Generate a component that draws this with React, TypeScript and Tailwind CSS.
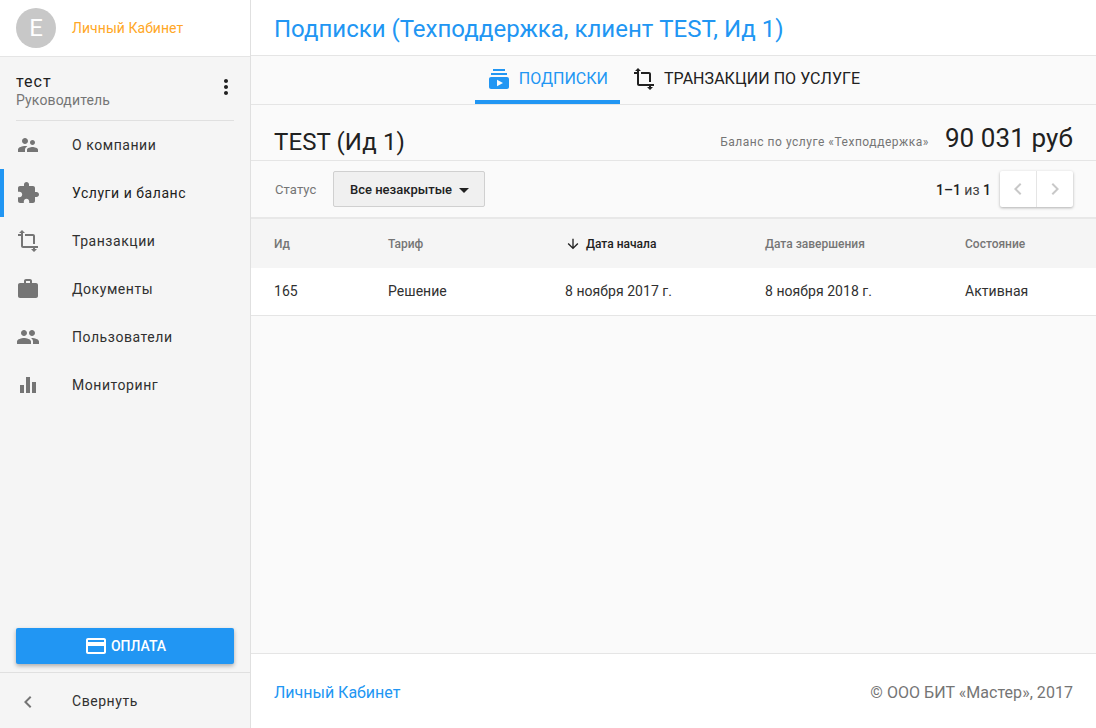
import React from 'react';

const Icon = ({ d, className }: { d: string; className?: string }) => (
  <svg viewBox="0 0 24 24" className={className} fill="currentColor">
    <path d={d} />
  </svg>
);

const ICONS = {
  company:
    'M16.5 12c1.38 0 2.49-1.12 2.49-2.5S17.88 7 16.5 7C15.12 7 14 8.12 14 9.5s1.12 2.5 2.5 2.5zM9 11c1.66 0 2.99-1.34 2.99-3S10.66 5 9 5C7.34 5 6 6.34 6 8s1.34 3 3 3zm7.5 3c-1.83 0-5.5.92-5.5 2.75V19h11v-2.25c0-1.83-3.67-2.75-5.5-2.75zM9 13c-2.33 0-7 1.17-7 3.5V19h7v-2.25c0-.85.33-2.34 2.37-3.47C10.5 13.1 9.66 13 9 13z',
  services:
    'M20.5 11H19V7c0-1.1-.9-2-2-2h-4V3.5C13 2.12 11.88 1 10.5 1S8 2.12 8 3.5V5H4c-1.1 0-1.99.9-1.99 2v3.8H3.5c1.49 0 2.7 1.21 2.7 2.7s-1.21 2.7-2.7 2.7H2V20c0 1.1.9 2 2 2h3.8v-1.5c0-1.49 1.21-2.7 2.7-2.7 1.49 0 2.7 1.21 2.7 2.7V22H17c1.1 0 2-.9 2-2v-4h1.5c1.38 0 2.5-1.12 2.5-2.5S21.88 11 20.5 11z',
  crop: 'M17 15h2V7c0-1.1-.9-2-2-2H9v2h8v8zM7 17V4H5v1H2v2h3v10c0 1.1.9 2 2 2h10v1h2v-1h3v-2H7zM6 1L3 4h6zM18 23l-3-3h6z',
  work: 'M20 6h-4V4c0-1.11-.89-2-2-2h-4c-1.11 0-2 .89-2 2v2H4c-1.11 0-1.99.89-1.99 2L2 19c0 1.11.89 2 2 2h16c1.11 0 2-.89 2-2V8c0-1.11-.89-2-2-2zm-6 0h-4V4h4v2z',
  people:
    'M16 11c1.66 0 2.99-1.34 2.99-3S17.66 5 16 5c-1.66 0-3 1.34-3 3s1.34 3 3 3zm-8 0c1.66 0 2.99-1.34 2.99-3S9.66 5 8 5C6.34 5 5 6.34 5 8s1.34 3 3 3zm0 2c-2.33 0-7 1.17-7 3.5V19h14v-2.5c0-2.33-4.67-3.5-7-3.5zm8 0c-.29 0-.62.02-.97.05 1.16.84 1.97 1.97 1.97 3.45V19h6v-2.5c0-2.33-4.67-3.5-7-3.5z',
  chart: 'M4 12h4v8H4zm6-8h4v16h-4zm6 5h4v11h-4z',
  subscriptions:
    'M20 8H4V6h16v2zm-2-6H6v2h12V2zm4 10v8c0 1.1-.9 2-2 2H4c-1.1 0-2-.9-2-2v-8c0-1.1.9-2 2-2h16c1.1 0 2 .9 2 2zm-6 4l-6-3.27v6.53L16 16z',
  card: 'M20 4H4c-1.11 0-1.99.89-1.99 2L2 18c0 1.11.89 2 2 2h16c1.11 0 2-.89 2-2V6c0-1.11-.89-2-2-2zm0 14H4v-6h16v6zm0-10H4V6h16v2z',
  dots: 'M12 8c1.1 0 2-.9 2-2s-.9-2-2-2-2 .9-2 2 .9 2 2 2zm0 2c-1.1 0-2 .9-2 2s.9 2 2 2 2-.9 2-2-.9-2-2-2zm0 6c-1.1 0-2 .9-2 2s.9 2 2 2 2-.9 2-2-.9-2-2-2z',
  chevronLeft: 'M15.41 7.41L14 6l-6 6 6 6 1.41-1.41L10.83 12z',
  chevronRight: 'M10 6L8.59 7.41 13.17 12l-4.58 4.59L10 18l6-6z',
  arrowDown: 'M20 12l-1.41-1.41L13 16.17V4h-2v12.17l-5.58-5.59L4 12l8 8 8-8z',
};

const MENU = [
  { label: 'О компании', icon: ICONS.company },
  { label: 'Услуги и баланс', icon: ICONS.services, active: true },
  { label: 'Транзакции', icon: ICONS.crop },
  { label: 'Документы', icon: ICONS.work },
  { label: 'Пользователи', icon: ICONS.people },
  { label: 'Мониторинг', icon: ICONS.chart },
];

const Sidebar = () => (
  <aside className="w-[251px] shrink-0 flex flex-col bg-[#f5f5f5] border-r border-[#e0e0e0]">
    <div className="h-[57px] shrink-0 bg-white border-b border-[#e5e5e5] flex items-center pl-4">
      <div className="w-10 h-10 rounded-full bg-[#c8c8c8] text-white text-[24px] flex items-center justify-center">
        E
      </div>
      <span className="ml-4 text-[14px] tracking-[0.05px] text-[#ffa726]">Личный Кабинет</span>
    </div>

    <div className="mx-4 h-[64px] shrink-0 border-b border-[#e0e0e0] flex items-start justify-between">
      <div className="pt-[16px]">
        <div className="text-[16px] leading-[18px] tracking-[1px] text-[#212121]">тест</div>
        <div className="text-[14px] leading-[18px] tracking-[0.15px] text-[#757575]">Руководитель</div>
      </div>
      <Icon d={ICONS.dots} className="w-6 h-6 mt-[18px] -mr-[4px] text-[#212121]" />
    </div>

    <nav className="flex flex-col">
      {MENU.map((item) => (
        <div
          key={item.label}
          className={`h-12 flex items-center pl-4 relative ${item.active ? 'text-[#212121]' : 'text-[#303030]'}`}
        >
          {item.active && <div className="absolute left-0 top-0 w-1 h-12 bg-[#2196f3]" />}
          <Icon d={item.icon} className="w-6 h-6 text-[#757575]" />
          <span className="ml-8 text-[14px] tracking-[0.55px]">{item.label}</span>
        </div>
      ))}
    </nav>

    <div className="mt-auto px-4 pb-2">
      <button className="w-full h-9 rounded-[2px] bg-[#2196f3] text-white text-[14px] font-medium shadow-[0_2px_4px_rgba(0,0,0,0.3)] flex items-center justify-center">
        <Icon d={ICONS.card} className="w-6 h-6 mr-[3px]" />
        ОПЛАТА
      </button>
    </div>
    <div className="h-[56px] shrink-0 border-t border-[#e0e0e0] flex items-center pl-4 pt-[2px] text-[#303030]">
      <Icon d={ICONS.chevronLeft} className="w-6 h-6 text-[#757575]" />
      <span className="ml-8 text-[14px] tracking-[0.55px]">Свернуть</span>
    </div>
  </aside>
);

const Tabs = () => (
  <div className="h-[49px] shrink-0 border-b border-[#e5e5e5] flex justify-center">
    <div className="flex items-center h-12 px-3 pt-[2px] text-[#2196f3] border-b-4 border-[#2196f3]">
      <Icon d={ICONS.subscriptions} className="w-6 h-6 mr-2" />
      <span className="text-[16px]">ПОДПИСКИ</span>
    </div>
    <div className="flex items-center h-12 px-3 pt-[2px] pb-1 text-[#212121]">
      <Icon d={ICONS.crop} className="w-6 h-6 mr-2" />
      <span className="text-[16px] tracking-[0.05px]">ТРАНЗАКЦИИ ПО УСЛУГЕ</span>
    </div>
  </div>
);

const COLUMNS = [
  { label: 'Ид', value: '165', width: 'w-[114px]' },
  { label: 'Тариф', value: 'Решение', width: 'w-[177px]' },
  { label: 'Дата начала', value: '8 ноября 2017 г.', width: 'w-[200px]', sorted: true },
  { label: 'Дата завершения', value: '8 ноября 2018 г.', width: 'w-[200px]' },
  { label: 'Состояние', value: 'Активная', width: 'flex-1' },
];

const Table = () => (
  <div>
    <div className="h-[51px] bg-[#f5f5f5] border-t-2 border-[#e8e8e8] flex items-center pl-[23px] pt-px">
      {COLUMNS.map((col) => (
        <div
          key={col.label}
          className={`${col.width} flex items-center text-[12px] font-medium ${col.sorted ? 'text-[#212121]' : 'text-[#757575]'}`}
        >
          {col.sorted && <Icon d={ICONS.arrowDown} className="w-4 h-4 mr-[5px] text-[#212121]" />}
          {col.label}
        </div>
      ))}
    </div>
    <div className="h-[48px] bg-white border-b border-[#e5e5e5] flex items-center pl-[23px]">
      {COLUMNS.map((col) => (
        <div key={col.label} className={`${col.width} text-[14px] tracking-[0.05px] text-[#303030]`}>
          {col.value}
        </div>
      ))}
    </div>
  </div>
);

const Main = () => (
  <main className="flex-1 min-w-0 flex flex-col bg-[#fafafa]">
    <div className="h-[56px] shrink-0 bg-white border-b border-[#e5e5e5] flex items-center px-[23px] pt-[2px]">
      <h1 className="text-[24px] text-[#2196f3]">Подписки (Техподдержка, клиент TEST, Ид 1)</h1>
    </div>
    <Tabs />

    <div className="h-[56px] shrink-0 border-b border-[#e5e5e5] flex items-center justify-between px-[23px] pt-[16px]">
      <h2 className="text-[24px] tracking-[0.1px] text-[#212121] pt-[2px]">TEST (Ид 1)</h2>
      <div className="flex items-center">
        <span className="text-[12px] tracking-[0.52px] text-[#757575] mr-4 pt-[2px]">Баланс по услуге «Техподдержка»</span>
        <span className="text-[26px] tracking-[0.1px] text-[#212121] pb-1">90 031 руб</span>
      </div>
    </div>

    <div className="h-[56px] shrink-0 flex items-center justify-between px-[23px]">
      <div className="flex items-center">
        <span className="text-[13px] tracking-[0.1px] text-[#757575] w-[59px] pl-px pt-[2px]">Статус</span>
        <button className="h-9 w-[152px] rounded-[2px] border border-[#d0d0d0] bg-[#f0f0f0] flex items-center pl-4 pt-[2px] text-[13px] font-medium text-[#212121]">
          Все незакрытые
          <span className="ml-[7px] w-0 h-0 border-x-[5px] border-x-transparent border-t-[5px] border-t-[#212121]" />
        </button>
      </div>
      <div className="flex items-center">
        <span className="text-[14px] text-[#424242] mr-[9px] pt-[2px]">
          <span className="font-medium text-[#212121]">1–1</span> из <span className="font-medium text-[#212121]">1</span>
        </span>
        <div className="flex bg-white rounded-[2px] shadow-[0_1px_3px_rgba(0,0,0,0.3)]">
          <div className="w-[37px] h-9 border-r border-[#e5e5e5] flex items-center justify-center">
            <Icon d={ICONS.chevronLeft} className="w-6 h-6 text-[#c8c8c8]" />
          </div>
          <div className="w-[36px] h-9 flex items-center justify-center">
            <Icon d={ICONS.chevronRight} className="w-6 h-6 text-[#c8c8c8]" />
          </div>
        </div>
      </div>
    </div>

    <Table />

    <div className="mt-auto h-[75px] shrink-0 bg-white border-t border-[#e5e5e5] flex items-center justify-between px-[23px] pt-[3px]">
      <span className="text-[16px] text-[#2196f3]">Личный Кабинет</span>
      <span className="text-[16px] tracking-[0.04px] text-[#757575]">© ООО БИТ «Мастер», 2017</span>
    </div>
  </main>
);

export default function App() {
  return (
    <div className="w-[1096px] h-[728px] flex overflow-hidden font-['Roboto',sans-serif]">
      <Sidebar />
      <Main />
    </div>
  );
}
